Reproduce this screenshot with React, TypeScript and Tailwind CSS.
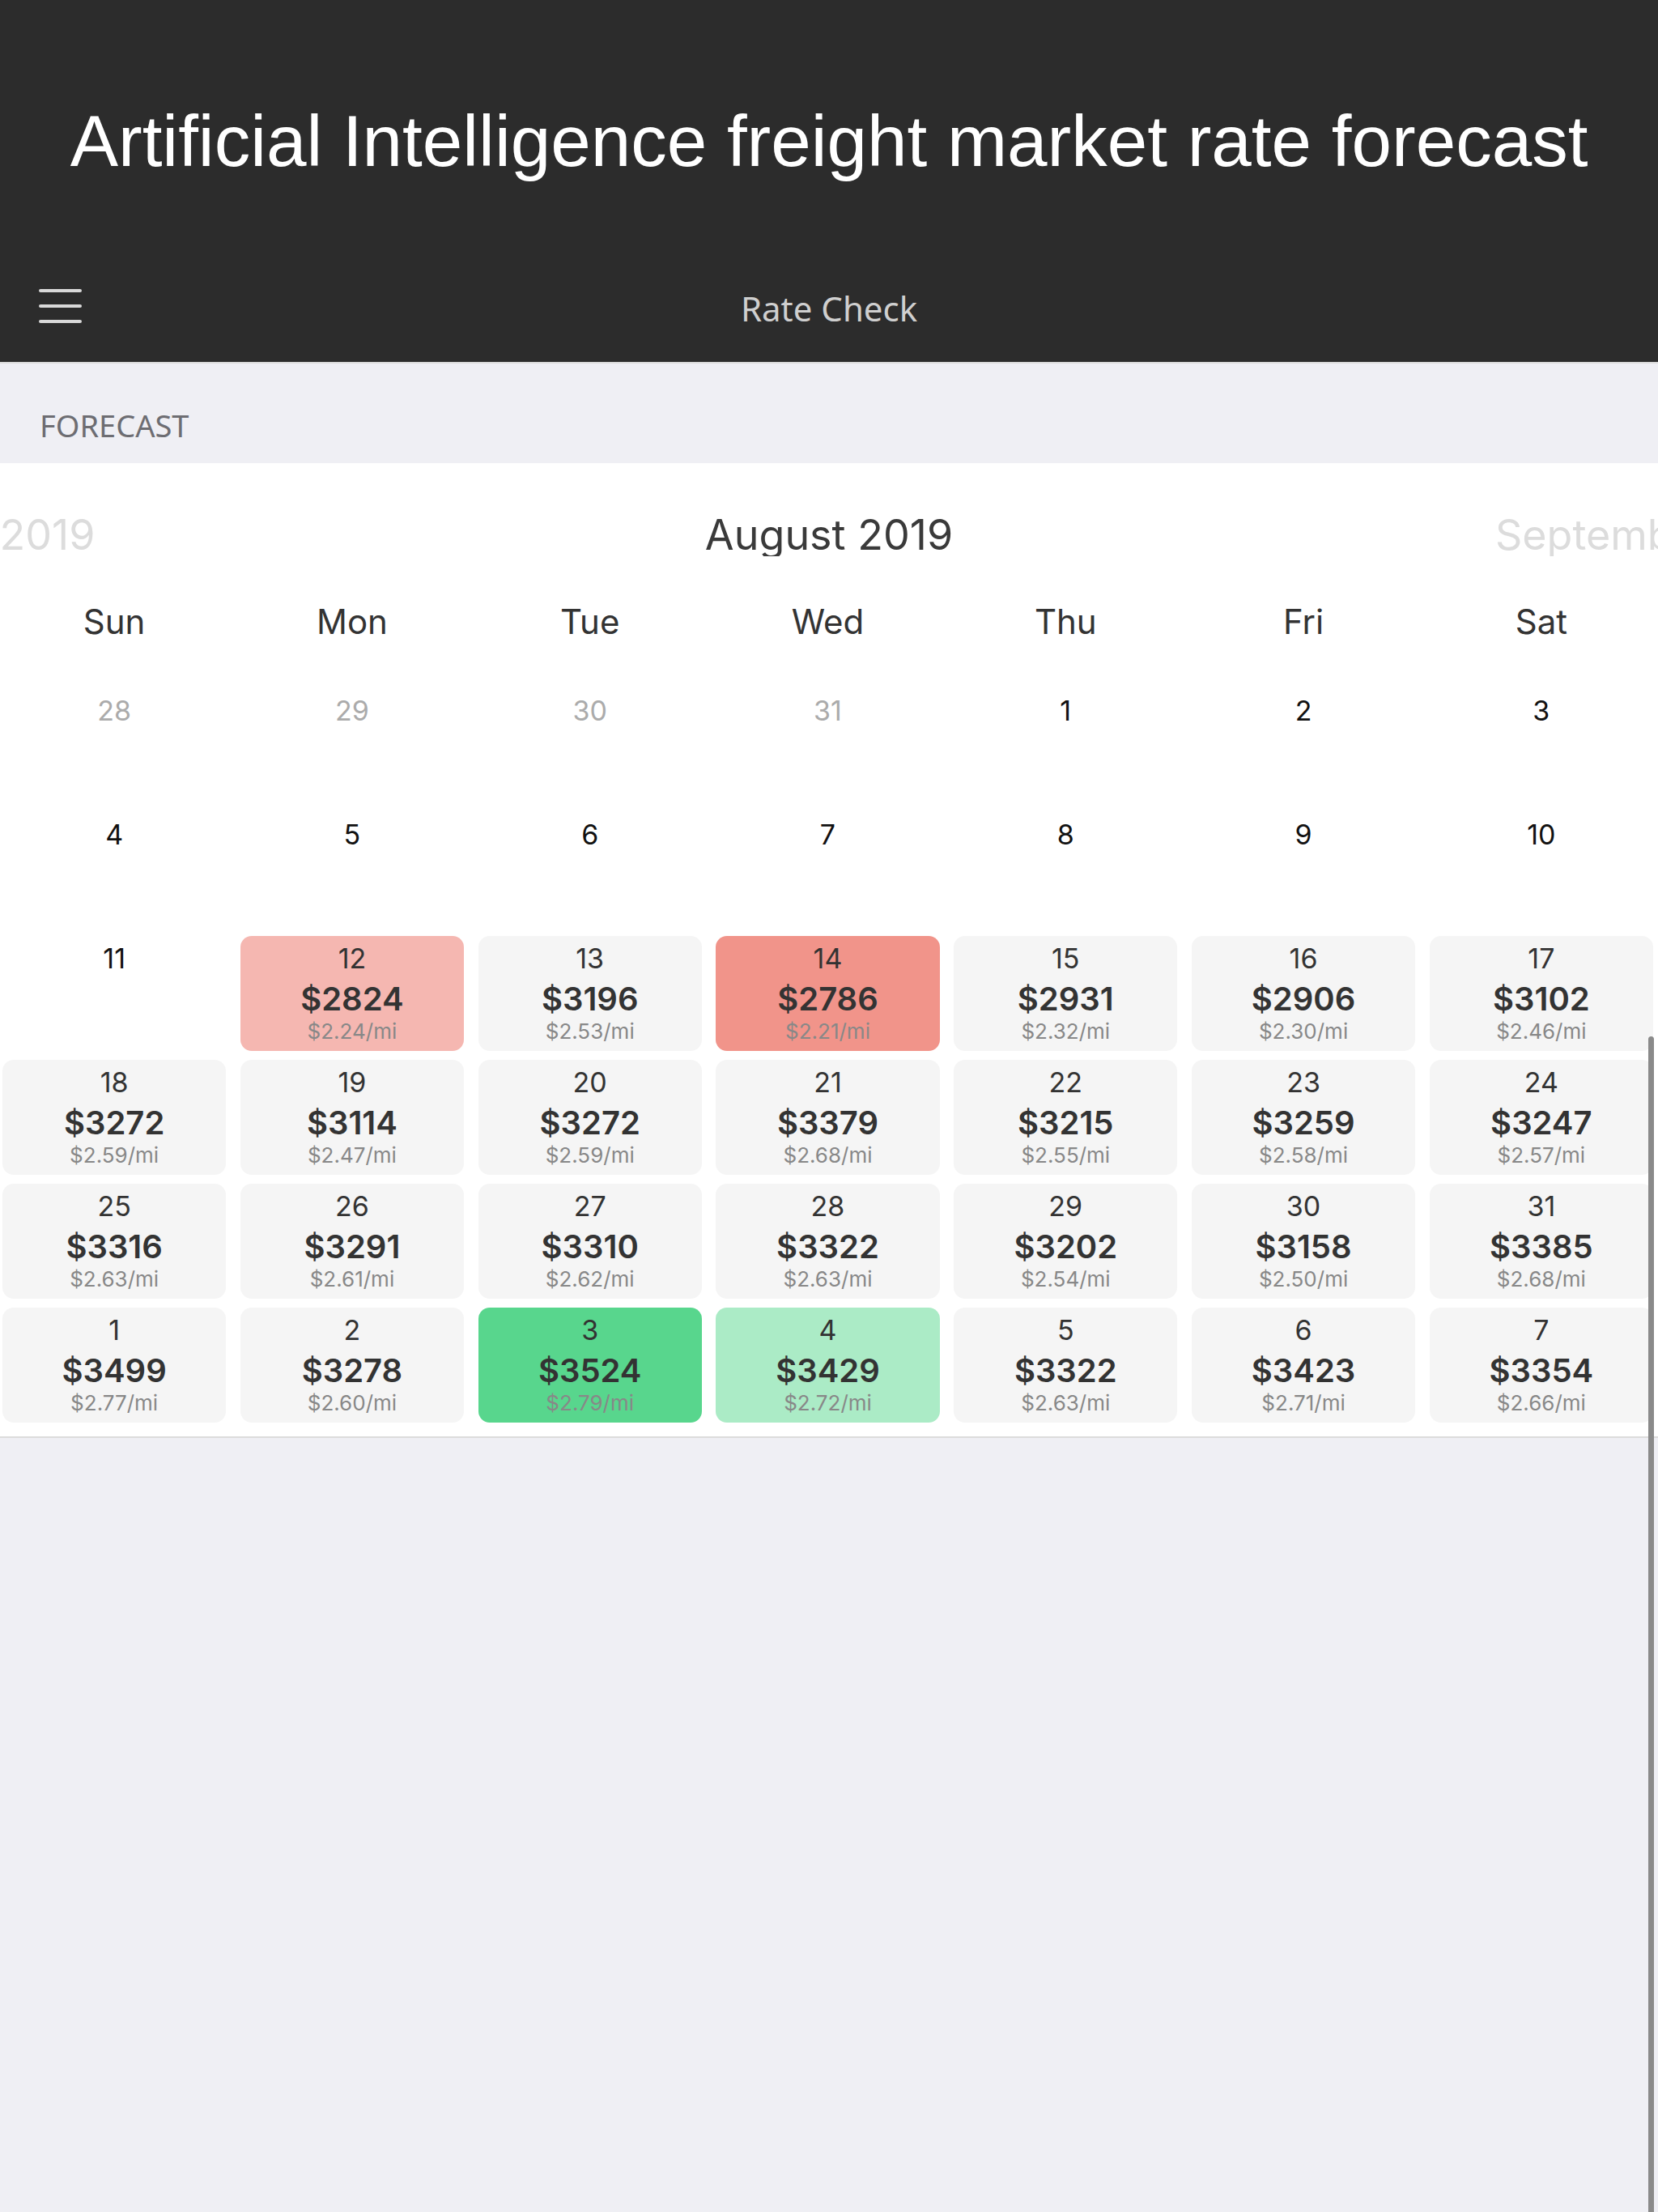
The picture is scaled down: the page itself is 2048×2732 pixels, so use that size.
import React from 'react';

type Day = {
    day: number;
    price?: number;
    perMile?: string;
    muted?: boolean;
    tone?: 'red' | 'lightRed' | 'green' | 'lightGreen';
};

const weeks: Day[][] = [
    [
        { day: 28, muted: true },
        { day: 29, muted: true },
        { day: 30, muted: true },
        { day: 31, muted: true },
        { day: 1 },
        { day: 2 },
        { day: 3 },
    ],
    [{ day: 4 }, { day: 5 }, { day: 6 }, { day: 7 }, { day: 8 }, { day: 9 }, { day: 10 }],
    [
        { day: 11 },
        { day: 12, price: 2824, perMile: '2.24', tone: 'lightRed' },
        { day: 13, price: 3196, perMile: '2.53' },
        { day: 14, price: 2786, perMile: '2.21', tone: 'red' },
        { day: 15, price: 2931, perMile: '2.32' },
        { day: 16, price: 2906, perMile: '2.30' },
        { day: 17, price: 3102, perMile: '2.46' },
    ],
    [
        { day: 18, price: 3272, perMile: '2.59' },
        { day: 19, price: 3114, perMile: '2.47' },
        { day: 20, price: 3272, perMile: '2.59' },
        { day: 21, price: 3379, perMile: '2.68' },
        { day: 22, price: 3215, perMile: '2.55' },
        { day: 23, price: 3259, perMile: '2.58' },
        { day: 24, price: 3247, perMile: '2.57' },
    ],
    [
        { day: 25, price: 3316, perMile: '2.63' },
        { day: 26, price: 3291, perMile: '2.61' },
        { day: 27, price: 3310, perMile: '2.62' },
        { day: 28, price: 3322, perMile: '2.63' },
        { day: 29, price: 3202, perMile: '2.54' },
        { day: 30, price: 3158, perMile: '2.50' },
        { day: 31, price: 3385, perMile: '2.68' },
    ],
    [
        { day: 1, price: 3499, perMile: '2.77' },
        { day: 2, price: 3278, perMile: '2.60' },
        { day: 3, price: 3524, perMile: '2.79', tone: 'green' },
        { day: 4, price: 3429, perMile: '2.72', tone: 'lightGreen' },
        { day: 5, price: 3322, perMile: '2.63' },
        { day: 6, price: 3423, perMile: '2.71' },
        { day: 7, price: 3354, perMile: '2.66' },
    ],
];

const toneBg: Record<string, string> = {
    red: 'bg-[#f1948a]',
    lightRed: 'bg-[#f5b7b1]',
    green: 'bg-[#58d68d]',
    lightGreen: 'bg-[#abebc6]',
};

const weekdays = ['Sun', 'Mon', 'Tue', 'Wed', 'Thu', 'Fri', 'Sat'];

function DayCell({ d }: { d: Day }) {
    const hasPrice = d.price !== undefined;
    const bg = hasPrice ? (d.tone ? toneBg[d.tone] : 'bg-[#f5f5f5]') : '';
    const dayColor = d.muted ? 'text-[#ababab]' : hasPrice ? 'text-[#333333]' : 'text-[#111111]';

    return (
        <div className={`flex h-[142px] flex-col items-center rounded-[14px] ${bg}`}>
            <div className={`mt-[10px] text-[34px] leading-[35px] ${dayColor}`}>{d.day}</div>
            {hasPrice && (
                <>
                    <div className="mt-[13px] text-[40px] font-semibold leading-[40px] text-[#333333]">${d.price}</div>
                    <div className="mt-[6px] text-[26px] leading-[27px] text-[#888888]">${d.perMile}/mi</div>
                </>
            )}
        </div>
    );
}

export default function App() {
    return (
        <div className="relative min-h-[2732px] w-[2048px] bg-[#efeff4] font-['Inter',sans-serif]">
            {/* top bar */}
            <header className="flex h-[449px] flex-col border-b-2 border-[#dcdcdc] bg-[#2c2c2c]">
                <h1 className="pt-[130px] text-center font-['Liberation_Sans',Arial,sans-serif] text-[89px] leading-[89px] text-white">
                    Artificial Intelligence freight market rate forecast
                </h1>
                <div className="relative mt-[94px] flex h-[134px] items-center justify-center">
                    <button type="button" className="absolute left-[48px] top-[44px] flex w-[53px] flex-col gap-[15px]">
                        <span className="h-[4px] w-full rounded-full bg-[#d9d9d9]" />
                        <span className="h-[4px] w-full rounded-full bg-[#d9d9d9]" />
                        <span className="h-[4px] w-full rounded-full bg-[#d9d9d9]" />
                    </button>
                    <span className="font-['Noto_Sans',sans-serif] text-[42px] text-[#cfcfcf]">Rate Check</span>
                </div>
            </header>

            <div className="h-[123px] pl-[49px] pt-[57px] font-['Noto_Sans',sans-serif] text-[38px] leading-[38px] text-[#6d6d72]">
                FORECAST
            </div>

            <section className="border-b-2 border-[#dcdcdc] bg-white pb-[17px] pt-[63px]">
                {/* month pager: neighbours peek in from the edges */}
                <div className="flex overflow-hidden text-[52px] leading-[52px]">
                    <div className="-ml-[512px] w-[1024px] shrink-0 text-center text-[#dcdcdc]">July 2019</div>
                    <div className="w-[1024px] shrink-0 text-center text-[#3a3a3a]">August 2019</div>
                    <div className="w-[1024px] shrink-0 text-center text-[#dcdcdc]">September 2019</div>
                </div>

                <div className="mt-[60px] grid grid-cols-7 gap-x-[17.5px] pl-[3px] pr-[6px] text-[42px] leading-[42px] text-[#333333]">
                    {weekdays.map((w) => (
                        <div key={w} className="text-center">
                            {w}
                        </div>
                    ))}
                </div>

                <div className="mt-[61px] grid grid-cols-7 gap-x-[17.5px] gap-y-[11px] pl-[3px] pr-[6px]">
                    {weeks.flat().map((d, i) => (
                        <DayCell key={i} d={d} />
                    ))}
                </div>
            </section>

            {/* scroll indicator */}
            <div className="absolute right-[5px] top-[1280px] bottom-0 w-[7px] rounded-t-full bg-[#8a8a8a]" />
        </div>
    );
}
